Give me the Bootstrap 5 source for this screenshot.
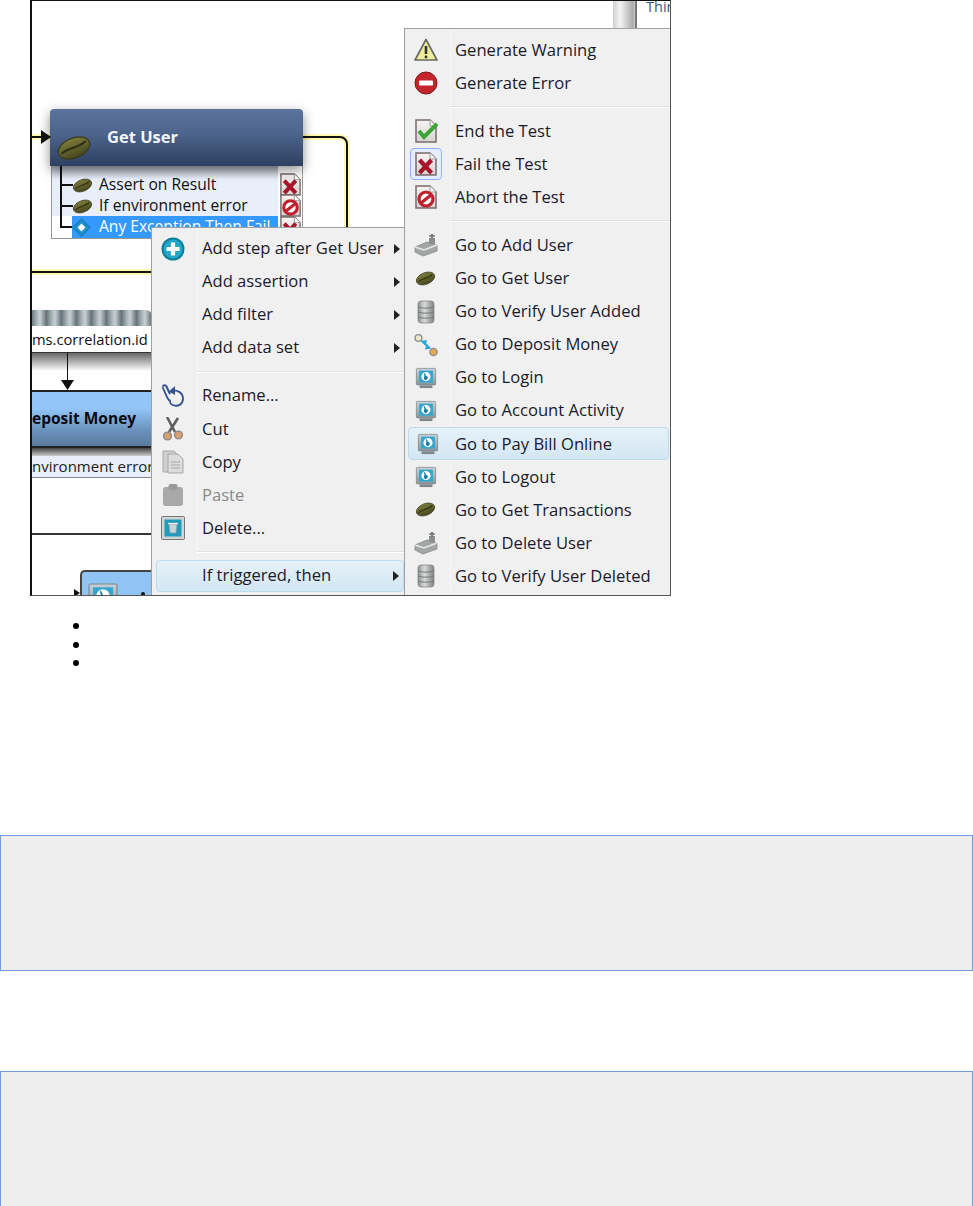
<!DOCTYPE html>
<html lang="en">
<head>
<meta charset="utf-8">
<title>If triggered, then</title>
<link href="https://cdn.jsdelivr.net/npm/bootstrap@5.3.0/dist/css/bootstrap.min.css" rel="stylesheet">
<style>
body{margin:0;background:#fff;font-family:"Open Sans","Noto Sans",sans-serif}
.shot{position:relative;margin-left:30px;width:641px;height:596px;overflow:hidden;background:#fff;border-top:1px solid #111;border-left:2px solid #111;border-right:1px solid #555;border-bottom:1px solid #555}
.shot *{box-sizing:border-box}
.dia{position:absolute}
.gu-head{left:18px;top:108px;width:253px;height:57px;border-radius:4px 4px 0 0;background:linear-gradient(#5c739c,#4c638b 45%,#2e4060);box-shadow:0 4px 12px rgba(0,0,0,.45);color:#f4f6fa;font-weight:700;font-size:16.5px;display:flex;align-items:center;padding-left:57px;padding-bottom:1px;z-index:2}
.gu-head svg{position:absolute;left:6px;top:21px}
.gu-list{left:19px;top:165px;width:252px;height:73px;border:1px solid #999;border-top:0;background:#fff;font-size:15.6px;color:#111;z-index:1}
.gu-band{position:absolute;left:0;right:24px;top:0;height:50px;background:linear-gradient(#aab0ba,#e8eefa 26%)}
.gu-row{position:absolute;left:20px;height:22px;display:flex;align-items:center;gap:6px;white-space:nowrap}
.gu-row.sel{background:#3399ff;color:#fff;width:206px;overflow:hidden;top:50px;gap:8px}
.tree{position:absolute;background:#111}
.wire{background:#111}
.wire-box{left:-10px;top:135px;width:326px;height:137px;border:2px solid #111;border-radius:0 8px 8px 0;box-shadow:0 0 0 2px #fff8b0,inset 0 0 0 2px #fff8b0}
.pipe{left:0;top:309px;width:120px;height:16px;border-radius:0 6px 0 0;background:repeating-linear-gradient(90deg,#6f7c82 0,#aab6ba 5px,#c8d0d3 8px,#5f6b70 15px)}
.jms{left:0;top:325px;width:120px;height:27px;border-bottom:1px solid #333;font-size:14.7px;color:#111;text-align:right;padding-right:5px;line-height:26px;white-space:nowrap;background:#fff}
.jms-shade{left:0;top:352px;width:120px;height:18px;background:linear-gradient(#666,#fff)}
.dep-head{left:0;top:389px;width:120px;height:58px;border-top:2px solid #222;border-bottom:2px solid #222;background:linear-gradient(#93c6f8 30%,#6b93bd 70%,#5a7a9c);font-weight:700;font-size:15.5px;color:#0a0a12;text-align:right;padding-right:16px;line-height:53px;white-space:nowrap}
.dep-shade{left:0;top:447px;width:120px;height:8px;background:linear-gradient(#444,#ccc)}
.dep-sub{left:0;top:455px;width:120px;height:22px;background:#e8eefa;border-bottom:1px solid #888;font-size:15px;color:#222;text-align:right;padding-right:2px;line-height:20px;white-space:nowrap}
.rule{left:0;top:532px;width:120px;height:2px;background:#333}
.lg-node{left:48px;top:569px;width:80px;height:40px;background:#90c4f5;border:2px solid #444;border-right:0;border-radius:5px 0 0 0}
.lg-node svg{position:absolute;left:3px;top:10px}
.lg-dot{left:109px;top:591px;width:4px;height:4px;border-radius:50%;background:#111}
.scrollish{left:581px;top:-1px;width:24px;height:29px;background:linear-gradient(90deg,#d0d0d0,#f4f4f4 30%,#a8a8a8 85%,#fff 88%,#777 92%,#777)}
.thin{left:614px;top:-2px;font-size:14.5px;color:#3c5a78;line-height:16px;white-space:nowrap}
.ctxmenu{border:1px solid #a0a0a0;border-radius:0;background-color:#f0f0f0;padding:0;margin:0;min-width:0;font-size:16.6px;color:#1a1a2a;z-index:5}
.m-a{position:absolute;left:119px;top:226px;width:254px;height:380px;padding-top:4px;background-image:linear-gradient(90deg,transparent 44px,#e2e2e2 44px,#fff 45px,transparent 46px)}
.m-b{position:absolute;left:372px;top:27px;width:268px;height:570px;padding-top:4.6px;background-image:linear-gradient(90deg,transparent 44px,#e2e2e2 44px,#fff 45px,transparent 46px)}
.ctxrow{height:33.07px;padding:0;display:flex;align-items:center;position:relative;color:#1a1a2a;white-space:nowrap;background:transparent;line-height:1}
.ctxrow:hover{background:transparent;color:#1a1a2a}
.icell{width:41px;flex:none;display:flex;justify-content:center}
.m-a .icell{margin-right:9px}
.m-b .icell{margin-right:9px}
.m-a .ctxrow.hot{margin:0 0 0 4px;height:32px;width:calc(100% - 4px)}
.m-a .hot .icell{width:37px;margin-right:8px}
.m-b .ctxrow.hot{margin:0 2px 0 3px;width:calc(100% - 5px)}
.m-b .hot .icell{width:38px;margin-right:8px}
.hot{background:linear-gradient(#e6f1f8,#d2e7f3);border:1px solid #bcdcec;border-radius:4px}
.hot:hover{background:linear-gradient(#e6f1f8,#d2e7f3)}
.off,.off:hover{color:#8a8a8a}
.caret-r{position:absolute;right:4px;top:50%;margin-top:-5px;width:0;height:0;border-left:6px solid #222;border-top:5px solid transparent;border-bottom:5px solid transparent}
.ctxsep{height:15px;margin:0 0 0 45px;display:flex;align-items:center}
.ctxsep::before{content:"";display:block;width:100%;height:2px;background:linear-gradient(#e2e2e2 50%,#fff 50%)}
.flagged{width:32px;height:32px;border:1px solid #8fb0ff;background:#e4eeff;border-radius:4px;display:flex;align-items:center;justify-content:center}
.blank-list{margin:17px 0 0;padding-left:91px;list-style:disc;font-size:16px;color:#000;height:222px}
.blank-list li{height:18.5px}
.note-box{height:136px;width:973px;background:#eee;border:1px solid #6f9fd8}
.gap-box{height:100px}
</style>
</head>
<body>
<svg width="0" height="0" class="position-absolute">
<defs>
<linearGradient id="bg" x1="0" y1="0" x2="0" y2="1"><stop offset="0" stop-color="#7c7c3c"/><stop offset="1" stop-color="#46461f"/></linearGradient>
<linearGradient id="dg" x1="0" y1="0" x2="0" y2="1"><stop offset="0" stop-color="#f8f4f4"/><stop offset="1" stop-color="#d6d2d2"/></linearGradient>
<linearGradient id="cg" x1="0" y1="0" x2="1" y2="0"><stop offset="0" stop-color="#8a8f8c"/><stop offset=".4" stop-color="#d8dcd9"/><stop offset="1" stop-color="#7d827f"/></linearGradient>
<linearGradient id="mg" x1="0" y1="0" x2="0" y2="1"><stop offset="0" stop-color="#c9d2d6"/><stop offset="1" stop-color="#8d9599"/></linearGradient>
<symbol id="i-bean" viewBox="0 0 24 24"><g transform="rotate(-22 12 12)"><ellipse cx="12" cy="12" rx="11" ry="6.6" fill="url(#bg)" stroke="#3a3a1c" stroke-width=".8"/><path d="M3 12.5C8 10 15 13.5 21 10.5" fill="none" stroke="#2c2c12" stroke-width="1.3"/></g></symbol>
<symbol id="i-plus" viewBox="0 0 24 24"><circle cx="12" cy="12" r="11.5" fill="#0b7f9c"/><circle cx="12" cy="12" r="9.5" fill="#1fa8c8"/><path d="M12 5.5v13M5.5 12h13" stroke="#fff" stroke-width="4.2"/></symbol>
<symbol id="i-warn" viewBox="0 0 24 24"><path d="M12 1.5 23 22H1z" fill="#ecec9a" stroke="#666" stroke-width="1.6" stroke-linejoin="round"/><path d="M12 8v8" stroke="#333" stroke-width="2.6"/><circle cx="12" cy="19" r="1.4" fill="#333"/></symbol>
<symbol id="i-stop" viewBox="0 0 24 24"><circle cx="12" cy="12" r="11" fill="#c4242c" stroke="#7a1a1e" stroke-width="1"/><rect x="5" y="9.5" width="14" height="5" rx="1" fill="#fff"/></symbol>
<symbol id="i-doc" viewBox="0 0 24 24"><path d="M2 1h14l6 6v16H2z" fill="url(#dg)" stroke="#7a6a6a" stroke-width="1.5"/><path d="M16 1v6h6" fill="#fff" stroke="#999"/></symbol>
<symbol id="i-end" viewBox="0 0 24 24"><use href="#i-doc"/><path d="M5 12l5 6L23 5" fill="none" stroke="#3aa535" stroke-width="4"/></symbol>
<symbol id="i-fail" viewBox="0 0 24 24"><use href="#i-doc"/><path d="M5.500 8l12 13M17.500 8l-12 13" stroke="#a81428" stroke-width="4.200"/></symbol>
<symbol id="i-abort" viewBox="0 0 24 24"><use href="#i-doc"/><circle cx="12" cy="14" r="7" fill="#fff" stroke="#c0202c" stroke-width="3.200"/><path d="M7 18 17 10" stroke="#c0202c" stroke-width="3.200"/></symbol>
<symbol id="i-pump" viewBox="0 0 24 24"><path d="M1 14 13 9l10 3v6L9 23 1 19z" fill="#a2a7a5" stroke="#888" stroke-width=".8"/><path d="M1 14l9 3 13-5" fill="none" stroke="#e8e8e8" stroke-width="1.600"/><path d="M15 5h6v6h-6z" fill="#8a8f8d"/><path d="M18 1v5M15.500 3h5" stroke="#777" stroke-width="1.800"/></symbol>
<symbol id="i-db" viewBox="0 0 24 24"><rect x="4" y="1" width="16" height="22" rx="3" fill="url(#cg)" stroke="#888" stroke-width=".8"/><path d="M4 7c4 1.600 12 1.600 16 0M4 12c4 1.600 12 1.600 16 0M4 17c4 1.600 12 1.600 16 0" fill="none" stroke="#777" stroke-width="1"/></symbol>
<symbol id="i-link" viewBox="0 0 24 24"><circle cx="4.500" cy="5" r="3.400" fill="#ece8d0" stroke="#8a8f8c" stroke-width="1.400"/><circle cx="19.500" cy="19" r="3.600" fill="#e6a850" stroke="#8a8f8c" stroke-width="1.400"/><path d="M8 8l8 7" stroke="#777" stroke-width="1.200"/><path d="M6.500 8 13 7l-1.500 6zM17 15.500 11 16.500l1.500-6z" fill="#24a8dc"/></symbol>
<symbol id="i-web" viewBox="0 0 24 24"><rect x="1.500" y="1.500" width="21" height="18" rx="1" fill="url(#mg)" stroke="#7d858a" stroke-width=".8"/><rect x="4.500" y="4" width="15" height="13" fill="#31a6d0"/><circle cx="12" cy="10.500" r="5" fill="#fff"/><path d="M10 6.500c2 1 1 3 3 3.500s1 3-1 4.500c-2-1-3-2-2-4S9 8 10 6.500z" fill="#1f7da5"/><path d="M5 20h14v3H5z" fill="#7f868a"/></symbol>
<symbol id="i-rename" viewBox="0 0 24 24"><path d="M1.500 2.500c1.500-2 3-1.500 4 0l3.500 7.500" fill="none" stroke="#33508c" stroke-width="2"/><path d="M1.500 3l5 11c1 2 2 2.500 3 2" fill="#e8eefc" stroke="#33508c" stroke-width="1.800"/><path d="M10 6.500c6-1 12 2 12 8s-5 8-9 7-4-3-4-5" fill="none" stroke="#33508c" stroke-width="1.800" stroke-linejoin="round"/><path d="M14 2 8 7.500 14 11z" fill="#33508c"/></symbol>
<symbol id="i-cut" viewBox="0 0 24 24"><path d="M6 0l8 15M17 1l-9 14" stroke="#5f5f5f" stroke-width="2.600"/><circle cx="6.500" cy="19" r="3.900" fill="#d8a070" stroke="#8a8a8a" stroke-width="1.400"/><circle cx="17.500" cy="18" r="3.900" fill="#d8a070" stroke="#8a8a8a" stroke-width="1.400"/></symbol>
<symbol id="i-copy" viewBox="0 0 24 24"><path d="M2 1h11l4 4v17H2z" fill="#cfcfcf" stroke="#aaa"/><path d="M7 4h10l5 5v14H7z" fill="#dcdcdc" stroke="#a8a8a8"/><path d="M10 12h9M10 15h9M10 18h9" stroke="#a8a8a8" stroke-width="1.200"/></symbol>
<symbol id="i-paste" viewBox="0 0 24 24"><rect x="2" y="4" width="20" height="19" rx="3" fill="#a8a8a8"/><rect x="7.500" y="1" width="9" height="6" rx="2" fill="#9a9a9a"/></symbol>
<symbol id="i-trash" viewBox="0 0 24 24"><rect x=".5" y=".5" width="23" height="23" rx="1" fill="#d4d4d4" stroke="#777"/><rect x="3.500" y="3.500" width="17" height="17" fill="#1f9cbc"/><path d="M8 8h8l-1 9H9z" fill="#c6d4d8" stroke="#8a9a9e" stroke-width=".7"/><path d="M7 7.500h10" stroke="#eef" stroke-width="1.300"/></symbol>
<symbol id="i-diamond" viewBox="0 0 24 24"><path d="M12 1 23 12 12 23 1 12z" fill="#1e90c8" stroke="#0d6a98"/><path d="M12 7l5 5-5 5-5-5z" fill="#fff"/></symbol>
</defs>
</svg>

<div class="shot">
  <div class="dia scrollish"></div>
  <div class="dia thin">Thir</div>

  <div class="dia wire-box"></div>
  <div class="dia gu-list">
    <div class="gu-band"></div>
    <div class="tree" style="left:8px;top:0;width:2px;height:61px"></div>
    <div class="tree" style="left:8px;top:18px;width:13px;height:2px"></div>
    <div class="tree" style="left:8px;top:39px;width:13px;height:2px"></div>
    <div class="tree" style="left:8px;top:60px;width:13px;height:2px"></div>
    <div class="gu-row" style="top:8px"><svg width="21" height="21"><use href="#i-bean"/></svg><span>Assert on Result</span></div>
    <div class="gu-row" style="top:29px"><svg width="21" height="21"><use href="#i-bean"/></svg><span>If environment error</span></div>
    <div class="gu-row sel"><svg width="19" height="19"><use href="#i-diamond"/></svg><span>Any Exception Then Fail</span></div>
    <svg class="position-absolute" style="left:227px;top:7px" width="23" height="23"><use href="#i-fail"/></svg>
    <svg class="position-absolute" style="left:227px;top:28px" width="23" height="23"><use href="#i-abort"/></svg>
    <svg class="position-absolute" style="left:227px;top:50px" width="23" height="23"><use href="#i-fail"/></svg>
  </div>
  <div class="dia gu-head"><svg width="36" height="36" viewBox="0 0 24 24"><use href="#i-bean"/></svg>Get User</div>
  <div class="dia wire" style="left:0;top:135px;width:18px;height:2px"></div>
  <svg class="dia" style="left:9px;top:129px;z-index:3" width="10" height="14"><path d="M0 0 10 7 0 14z" fill="#111"/></svg>

  <div class="dia pipe"></div>
  <div class="dia jms">ms.correlation.id</div>
  <div class="dia jms-shade"></div>
  <div class="dia" style="left:35px;top:352px;width:1px;height:30px;background:#111"></div>
  <svg class="dia" style="left:29px;top:379px" width="13" height="10"><path d="M0 0H13L6.500 10z" fill="#111"/></svg>
  <div class="dia dep-head">eposit Money</div>
  <div class="dia dep-shade"></div>
  <div class="dia dep-sub">nvironment error</div>
  <div class="dia rule"></div>
  <div class="dia lg-node"><svg width="36" height="32"><use href="#i-web"/></svg></div>
  <div class="dia lg-dot"></div>
  <svg class="dia" style="left:42px;top:588px" width="6" height="8"><path d="M0 0 6 4 0 8z" fill="#111"/></svg>

  <div class="dropdown-menu show ctxmenu m-a">
    <a class="dropdown-item ctxrow"><span class="icell"><svg width="24" height="24"><use href="#i-plus"/></svg></span><span class="txt">Add step after Get User</span><i class="caret-r"></i></a>
    <a class="dropdown-item ctxrow"><span class="icell"></span><span class="txt">Add assertion</span><i class="caret-r"></i></a>
    <a class="dropdown-item ctxrow"><span class="icell"></span><span class="txt">Add filter</span><i class="caret-r"></i></a>
    <a class="dropdown-item ctxrow"><span class="icell"></span><span class="txt">Add data set</span><i class="caret-r"></i></a>
    <div class="ctxsep"></div>
    <a class="dropdown-item ctxrow"><span class="icell"><svg width="24" height="24"><use href="#i-rename"/></svg></span><span class="txt">Rename...</span></a>
    <a class="dropdown-item ctxrow"><span class="icell"><svg width="24" height="24"><use href="#i-cut"/></svg></span><span class="txt">Cut</span></a>
    <a class="dropdown-item ctxrow"><span class="icell"><svg width="24" height="24"><use href="#i-copy"/></svg></span><span class="txt">Copy</span></a>
    <a class="dropdown-item ctxrow off"><span class="icell"><svg width="24" height="24"><use href="#i-paste"/></svg></span><span class="txt">Paste</span></a>
    <a class="dropdown-item ctxrow"><span class="icell"><svg width="24" height="24"><use href="#i-trash"/></svg></span><span class="txt">Delete...</span></a>
    <div class="ctxsep"></div>
    <a class="dropdown-item ctxrow hot"><span class="icell"></span><span class="txt">If triggered, then</span><i class="caret-r"></i></a>
  </div>

  <div class="dropdown-menu show ctxmenu m-b">
    <a class="dropdown-item ctxrow"><span class="icell"><svg width="24" height="24"><use href="#i-warn"/></svg></span><span class="txt">Generate Warning</span></a>
    <a class="dropdown-item ctxrow"><span class="icell"><svg width="24" height="24"><use href="#i-stop"/></svg></span><span class="txt">Generate Error</span></a>
    <div class="ctxsep"></div>
    <a class="dropdown-item ctxrow"><span class="icell"><svg width="24" height="24"><use href="#i-end"/></svg></span><span class="txt">End the Test</span></a>
    <a class="dropdown-item ctxrow"><span class="icell"><span class="flagged"><svg width="24" height="24"><use href="#i-fail"/></svg></span></span><span class="txt">Fail the Test</span></a>
    <a class="dropdown-item ctxrow"><span class="icell"><svg width="24" height="24"><use href="#i-abort"/></svg></span><span class="txt">Abort the Test</span></a>
    <div class="ctxsep"></div>
    <a class="dropdown-item ctxrow"><span class="icell"><svg width="24" height="24"><use href="#i-pump"/></svg></span><span class="txt">Go to Add User</span></a>
    <a class="dropdown-item ctxrow"><span class="icell"><svg width="21" height="21"><use href="#i-bean"/></svg></span><span class="txt">Go to Get User</span></a>
    <a class="dropdown-item ctxrow"><span class="icell"><svg width="24" height="24"><use href="#i-db"/></svg></span><span class="txt">Go to Verify User Added</span></a>
    <a class="dropdown-item ctxrow"><span class="icell"><svg width="24" height="24"><use href="#i-link"/></svg></span><span class="txt">Go to Deposit Money</span></a>
    <a class="dropdown-item ctxrow"><span class="icell"><svg width="22" height="22"><use href="#i-web"/></svg></span><span class="txt">Go to Login</span></a>
    <a class="dropdown-item ctxrow"><span class="icell"><svg width="22" height="22"><use href="#i-web"/></svg></span><span class="txt">Go to Account Activity</span></a>
    <a class="dropdown-item ctxrow hot"><span class="icell"><svg width="22" height="22"><use href="#i-web"/></svg></span><span class="txt">Go to Pay Bill Online</span></a>
    <a class="dropdown-item ctxrow"><span class="icell"><svg width="22" height="22"><use href="#i-web"/></svg></span><span class="txt">Go to Logout</span></a>
    <a class="dropdown-item ctxrow"><span class="icell"><svg width="21" height="21"><use href="#i-bean"/></svg></span><span class="txt">Go to Get Transactions</span></a>
    <a class="dropdown-item ctxrow"><span class="icell"><svg width="24" height="24"><use href="#i-pump"/></svg></span><span class="txt">Go to Delete User</span></a>
    <a class="dropdown-item ctxrow"><span class="icell"><svg width="24" height="24"><use href="#i-db"/></svg></span><span class="txt">Go to Verify User Deleted</span></a>
  </div>
</div>

<ul class="blank-list">
  <li></li>
  <li></li>
  <li></li>
</ul>
<div class="note-box"></div>
<div class="gap-box"></div>
<div class="note-box"></div>
</body>
</html>
